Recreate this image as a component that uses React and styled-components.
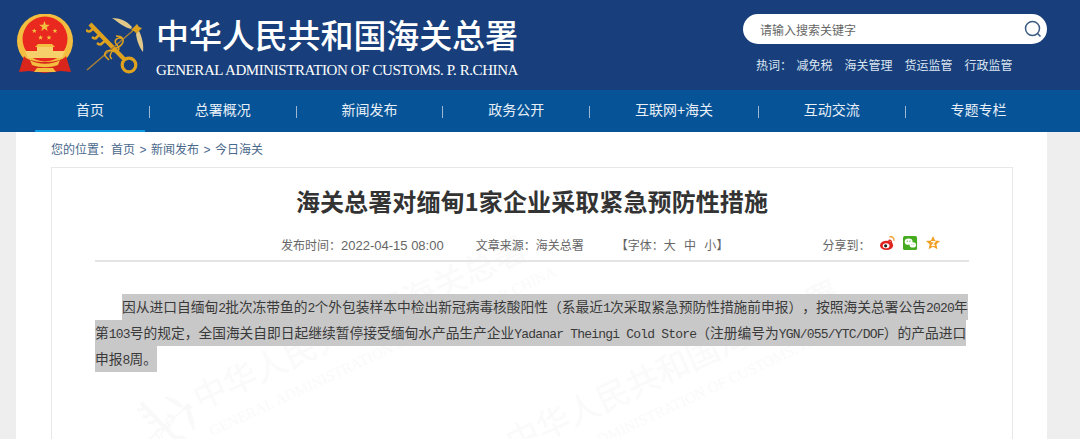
import React from 'react';
import styled, { createGlobalStyle } from 'styled-components';

const CJK = '"Noto Sans CJK SC", "Microsoft YaHei", sans-serif';

const Global = createGlobalStyle`
  html, body { margin: 0; padding: 0; height: 439px; overflow: hidden; background: #eeeeee; }
  body { font-family: "Liberation Sans", ${CJK}; }
  * { box-sizing: border-box; }
`;

const Shell = styled.div`
  width: 1080px;
  height: 439px;
  overflow: hidden;
  display: flex;
  flex-direction: column;
`;
const Header = styled.header`
  height: 90px;
  flex: none;
  background: #183f7b;
  display: flex;
  justify-content: space-between;
  padding: 14px 33px 0 17px;
`;
const Brand = styled.div`
  display: flex;
  align-items: flex-start;
`;
const BrandText = styled.div`
  margin-left: 12px;
  color: #fff;
`;
const BrandCn = styled.div`
  font-family: ${CJK};
  font-size: 33px;
  line-height: 40px;
  font-weight: 500;
  letter-spacing: -0.1px;
  white-space: nowrap;
`;
const BrandEn = styled.div`
  font-family: "Liberation Serif", serif;
  font-size: 15px;
  line-height: 18px;
  margin-top: 7px;
  letter-spacing: -0.42px;
  white-space: nowrap;
`;
const Tools = styled.div`
  width: 304px;
`;
const SearchBox = styled.div`
  height: 30px;
  border-radius: 15px;
  background: #fff;
  display: flex;
  align-items: center;
  justify-content: space-between;
  padding: 0 4px 0 17px;
  font-size: 12px;
  color: #666;
`;
const HotRow = styled.div`
  display: flex;
  margin-top: 13px;
  padding-left: 13px;
  font-size: 12px;
  line-height: 18px;
  color: #dbe5f2;
`;
const HotLabel = styled.span`
  width: 40.5px;
`;
const HotWord = styled.span`
  margin-right: 12px;
`;
const Nav = styled.nav`
  height: 42px;
  flex: none;
  background: #065497;
  display: flex;
  align-items: center;
  padding-left: 35px;
`;
const NavItem = styled.div`
  height: 42px;
  line-height: 40px;
  flex: none;
  text-align: center;
  color: #e8eff7;
  font-size: 14px;
  padding: 0 44.85px;
  white-space: nowrap;
`;
const HomeItem = styled(NavItem)`
  width: 110px;
  padding: 0;
  margin-right: 4px;
  border-bottom: 2px solid #0c9be3;
`;
const NavSep = styled.span`
  width: 1px;
  height: 12px;
  flex: none;
  margin-top: 2px;
  background: #9db6d2;
`;
const Page = styled.main`
  position: relative;
  flex: 1;
  margin: 0 33px 0 16px;
  background: #fff;
  padding: 0 35px;
`;
const Crumb = styled.div`
  height: 35px;
  padding-top: 9px;
  font-size: 12px;
  line-height: 18px;
  color: #4a688c;
`;
const CrumbGap = styled.span`
  margin: 0 4.5px;
`;
const Card = styled.article`
  position: relative;
  overflow: hidden;
  width: 962px;
  height: 300px;
  border: 1px solid #e8e8e8;
  padding: 0 43px;
`;
const Watermark = styled.div`
  position: absolute;
  left: ${p => p.$x}px;
  top: ${p => p.$y}px;
  transform: rotate(-25deg);
  transform-origin: left top;
  color: #fafafa;
  white-space: nowrap;
`;
const WatermarkKey = styled.svg`
  position: absolute;
  left: -66px;
  top: 4px;
  width: 58px;
  height: 56px;
  transform: rotate(25deg);
`;
const WatermarkCn = styled.div`
  font-family: ${CJK};
  font-size: 33px;
  line-height: 40px;
`;
const WatermarkEn = styled.div`
  font-family: "Liberation Serif", serif;
  font-size: 15px;
  line-height: 18px;
  margin-top: 8px;
`;
const Title = styled.h1`
  position: relative;
  margin: 0;
  padding-top: 15px;
  height: 62px;
  text-align: center;
  font-family: ${CJK};
  font-size: 24px;
  line-height: 36px;
  font-weight: 700;
  letter-spacing: 0.1px;
  color: #333;
`;
const Meta = styled.div`
  position: relative;
  height: 32px;
  border-bottom: 2px solid #e4e4e4;
  display: flex;
  align-items: flex-start;
  padding: 7px 0 0 186px;
  font-size: 12px;
  line-height: 18px;
  color: #666;
  white-space: nowrap;
`;
const MetaItem = styled.span`
  margin-right: ${p => p.$gap}px;
`;
const DateText = styled.span`
  font-size: 13px;
`;
const FontSizes = styled.span`
  word-spacing: 5px;
`;
const ShareIcon = styled.svg`
  width: 15px;
  height: 15px;
  margin: -1px 8px 0 0;
  flex: none;
`;
const Body = styled.div`
  position: relative;
  margin-top: 32px;
  font-family: ${CJK};
  font-size: 13.74px;
  text-spacing-trim: space-all;
  color: #3a3a3a;
`;
const Line = styled.div`
  width: fit-content;
  height: 26px;
  line-height: 25px;
  background: #c8c8c8;
  margin-left: ${p => p.$indent || 0}px;
  white-space: nowrap;
`;
const Lat = styled.span`
  font-family: "Liberation Mono", monospace;
  font-size: 13px;
  letter-spacing: -0.8px;
`;

const Star = ({ x, y, r, fill }) => {
  const pts = Array.from({ length: 10 }, (_, i) => {
    const a = -Math.PI / 2 + (i * Math.PI) / 5;
    const d = i % 2 ? r * 0.42 : r;
    return `${(x + d * Math.cos(a)).toFixed(2)},${(y + d * Math.sin(a)).toFixed(2)}`;
  }).join(' ');
  return <polygon points={pts} fill={fill} />;
};

function Emblem() {
  const g = '#f3bd3f';
  return (
    <svg width="56" height="60" viewBox="0 0 56 60" style={{ flex: 'none' }}>
      <ellipse cx="28" cy="27" rx="28" ry="27.5" fill={g} />
      <circle cx="28" cy="25" r="22.5" fill="#e9291f" />
      <Star x={27.5} y={12.5} r={5.5} fill={g} />
      <Star x={17.3} y={17} r={2.6} fill={g} />
      <Star x={38} y={17} r={2.6} fill={g} />
      <Star x={23.6} y={23.6} r={2.6} fill={g} />
      <Star x={32} y={23.6} r={2.6} fill={g} />
      <path d="M21 30h14l3 3H18z" fill={g} />
      <rect x="20" y="33" width="16" height="4" fill="#f6d06a" />
      <path d="M8 37h40l-3 7H11z" fill="#f6d06a" />
      <path d="M7 42C13 50 43 50 49 42l5 16-10-1-16 2-16-2-10 1z" fill="#d8261c" />
      <path d="M13 46c8 5 22 5 30 0l-2 5c-8 3-18 3-26 0z" fill={g} />
      <path d="M20 54h16l3 4H17z" fill={g} />
    </svg>
  );
}

function KeyShape({ gold, pale, rod }) {
  return (
    <>
      <path d="M4 6L38 41" stroke={gold} strokeWidth="4.2" />
      <path d="M8 10L3 14M3 14l-3-2M14 16l-5 5M9 21l-3-2M20 22l-6 5M14 27l-3-2" stroke={gold} strokeWidth="2.6" fill="none" />
      <circle cx="43" cy="47" r="6.8" fill="none" stroke={gold} strokeWidth="3.2" />
      <path d="M1 52L50 10" stroke={rod} strokeWidth="1.5" />
      <path d="M37 21c-6-3-10 2-6 6s1 8-5 6-9 3-6 6 3 3 3 3M30 18c6 0 9 3 6 8s-8 3-10 7-3 6 0 8" stroke={gold} strokeWidth="1.5" fill="none" />
      <path d="M51 6l2 3 3 1-3 3-2 3-3-3-3-1 3-3z" fill={gold} />
      <path d="M46 9C41 3 34 0 26 0c4 2 6 5 10 7 3 2 6 3 9 4zM53 13c3 6 5 14 4 21-3-4-6-10-7-18z" fill={pale} />
    </>
  );
}

function KeyLogo() {
  return (
    <svg width="58" height="56" viewBox="0 0 58 56" style={{ flex: 'none', margin: '4px 0 0 13px' }}>
      <KeyShape gold="#dfa21f" pale="#e2c98a" rod="#a98136" />
    </svg>
  );
}

function SearchIcon() {
  return (
    <svg width="20" height="20" viewBox="0 0 20 20" fill="none">
      <circle cx="9.5" cy="9.5" r="7" stroke="#3c5b83" strokeWidth="1.5" />
      <path d="M14.5 14.5l3 3" stroke="#3c5b83" strokeWidth="1.6" />
    </svg>
  );
}

function WatermarkMark({ x, y }) {
  return (
    <Watermark $x={x} $y={y}>
      <WatermarkKey viewBox="0 0 58 56" fill="none">
        <KeyShape gold="#f9f9f9" pale="#f9f9f9" rod="#f9f9f9" />
      </WatermarkKey>
      <WatermarkCn>中华人民共和国海关总署</WatermarkCn>
      <WatermarkEn>GENERAL ADMINISTRATION OF CUSTOMS. P. R.CHINA</WatermarkEn>
    </Watermark>
  );
}

export default function App() {
  return (
    <Shell>
      <Global />
      <Header>
        <Brand>
          <Emblem />
          <KeyLogo />
          <BrandText>
            <BrandCn>中华人民共和国海关总署</BrandCn>
            <BrandEn>GENERAL ADMINISTRATION OF CUSTOMS. P. R.CHINA</BrandEn>
          </BrandText>
        </Brand>
        <Tools>
          <SearchBox>
            <span>请输入搜索关键字</span>
            <SearchIcon />
          </SearchBox>
          <HotRow>
            <HotLabel>热词：</HotLabel>
            <HotWord>减免税</HotWord>
            <HotWord>海关管理</HotWord>
            <HotWord>货运监管</HotWord>
            <HotWord>行政监管</HotWord>
          </HotRow>
        </Tools>
      </Header>
      <Nav>
        <HomeItem>首页</HomeItem>
        <NavSep />
        <NavItem>总署概况</NavItem>
        <NavSep />
        <NavItem>新闻发布</NavItem>
        <NavSep />
        <NavItem>政务公开</NavItem>
        <NavSep />
        <NavItem>互联网+海关</NavItem>
        <NavSep />
        <NavItem>互动交流</NavItem>
        <NavSep />
        <NavItem>专题专栏</NavItem>
      </Nav>
      <Page>
        <Crumb>
          您的位置：首页<CrumbGap>&gt;</CrumbGap>新闻发布<CrumbGap>&gt;</CrumbGap>今日海关
        </Crumb>
        <Card>
          <WatermarkMark x={134} y={212} />
          <WatermarkMark x={447} y={256} />
          <Title>海关总署对缅甸1家企业采取紧急预防性措施</Title>
          <Meta>
            <MetaItem $gap={32}>发布时间：<DateText>2022-04-15 08:00</DateText></MetaItem>
            <MetaItem $gap={32}>文章来源：海关总署</MetaItem>
            <MetaItem $gap={94}>【字体：<FontSizes>大 中 小</FontSizes>】</MetaItem>
            <MetaItem $gap={10}>分享到：</MetaItem>
            <ShareIcon viewBox="0 0 16 16">
              <path d="M10 1c3-1 5 1 5 4" stroke="#f0a63c" strokeWidth="1.6" fill="none" />
              <ellipse cx="7" cy="10" rx="7" ry="5" fill="#dd2420" />
              <path d="M9 5c2-1 4 0 3 3" stroke="#dd2420" strokeWidth="1.5" fill="none" />
              <ellipse cx="6.5" cy="10.5" rx="3.6" ry="2.7" fill="#fff" />
              <circle cx="6" cy="10.5" r="1.7" fill="#222" />
            </ShareIcon>
            <ShareIcon viewBox="0 0 16 16">
              <rect width="15" height="15" rx="2" fill="#45ac1f" />
              <ellipse cx="6" cy="6" rx="4.2" ry="3.4" fill="#fff" />
              <ellipse cx="10.5" cy="9.5" rx="3.4" ry="2.8" fill="#fff" />
              <circle cx="4.6" cy="5.5" r=".6" fill="#45ac1f" />
              <circle cx="7.4" cy="5.5" r=".6" fill="#45ac1f" />
              <circle cx="9.5" cy="9.2" r=".5" fill="#45ac1f" />
              <circle cx="11.6" cy="9.2" r=".5" fill="#45ac1f" />
            </ShareIcon>
            <ShareIcon viewBox="0 0 16 16">
              <path d="M7.5 0l2.2 4.8 5.3.6-3.9 3.5 1.1 5.2-4.7-2.7-4.7 2.7 1.1-5.2L0 5.4l5.3-.6z" fill="#f2a024" />
              <path d="M5.5 6h4l-3 4h3" stroke="#fff" strokeWidth="1.2" fill="none" />
            </ShareIcon>
          </Meta>
          <Body>
            <Line $indent={27}>因从进口自缅甸<Lat>2</Lat>批次冻带鱼的<Lat>2</Lat>个外包装样本中检出新冠病毒核酸阳性（系最近<Lat>1</Lat>次采取紧急预防性措施前申报），按照海关总署公告<Lat>2020</Lat>年</Line>
            <Line>第<Lat>103</Lat>号的规定，全国海关自即日起继续暂停接受缅甸水产品生产企业<Lat>Yadanar Theingi Cold Store</Lat>（注册编号为<Lat>YGN/055/YTC/DOF</Lat>）的产品进口</Line>
            <Line>申报<Lat>8</Lat>周。</Line>
          </Body>
        </Card>
      </Page>
    </Shell>
  );
}
